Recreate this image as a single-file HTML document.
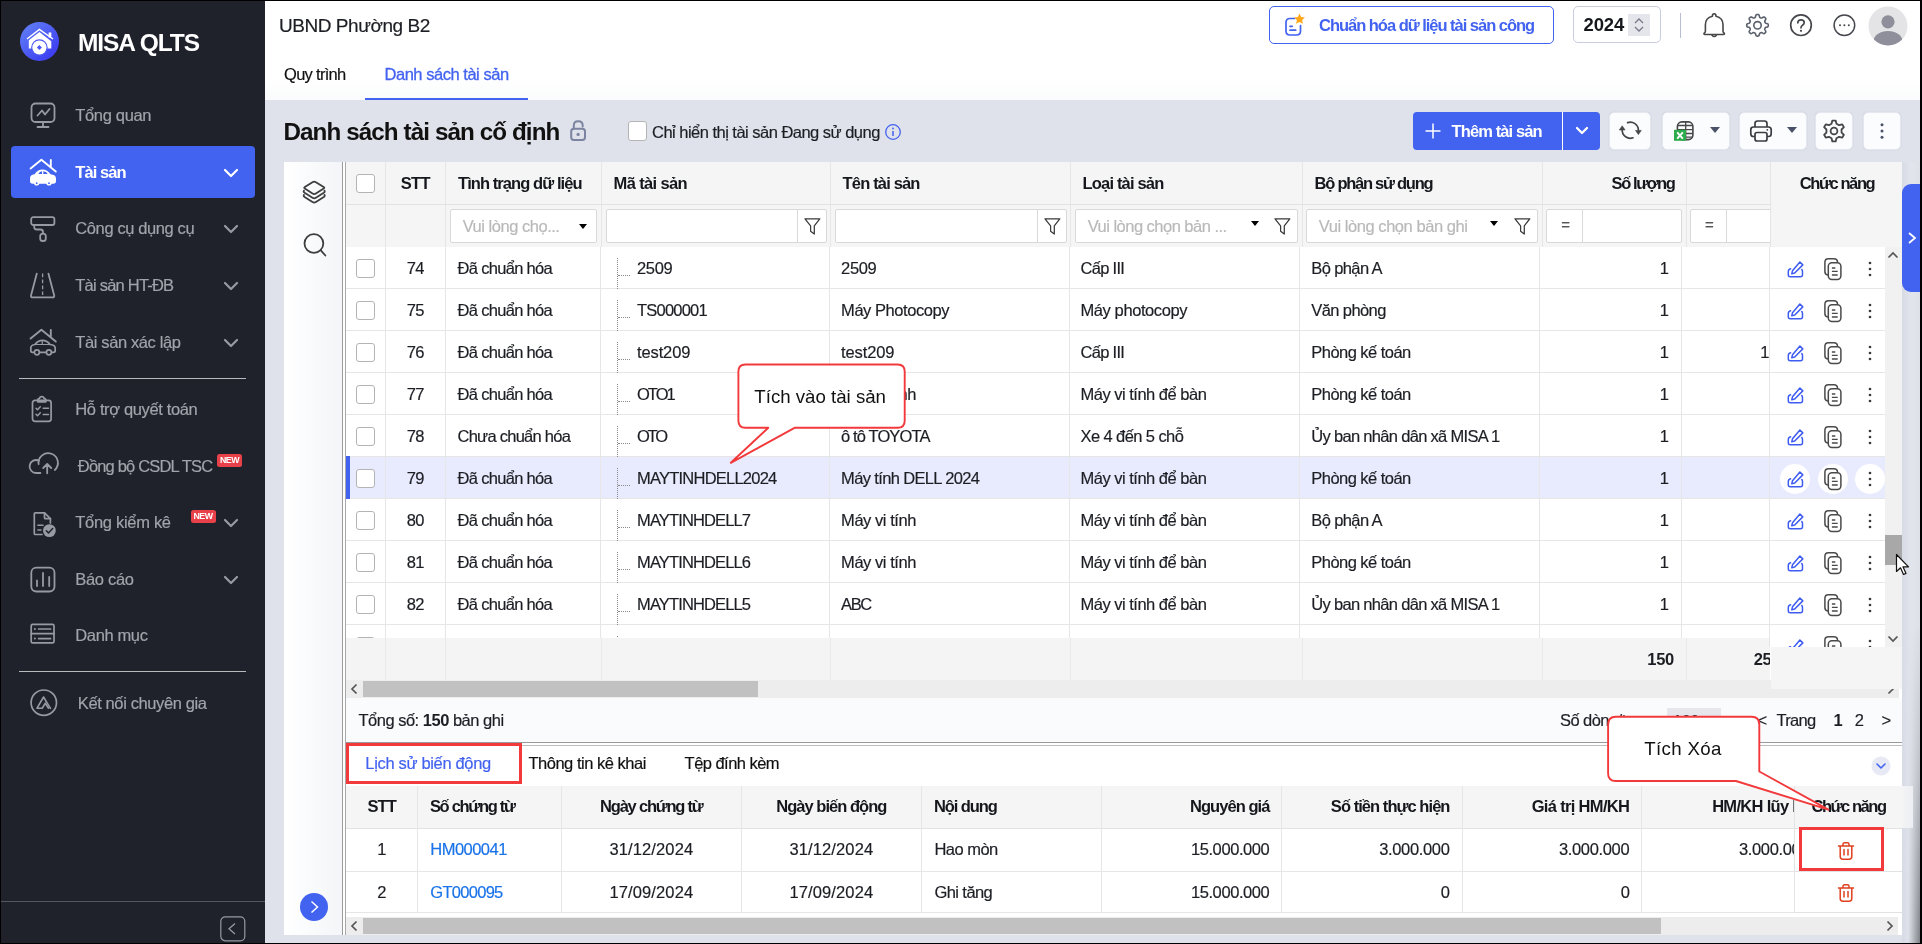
<!DOCTYPE html>
<html lang="vi"><head><meta charset="utf-8"><title>MISA QLTS - Danh sách tài sản cố định</title>
<style>
*{box-sizing:border-box;margin:0;padding:0}
html,body{width:1922px;height:944px;overflow:hidden}
#sidebar,#header,#toolbar,#panel,.ann{will-change:transform}
body{position:relative;background:#dfe2ea;font-family:"Liberation Sans",sans-serif;font-size:16.5px;color:#1c1e24;letter-spacing:-0.55px;-webkit-text-stroke:0.18px currentColor}
div,span,svg{position:absolute}
svg{display:block;overflow:visible}
b{font-weight:700}
/* sidebar */
#sidebar{left:0;top:0;width:265px;height:944px;background:#1f222b;z-index:5}
.logo{left:20px;top:22px;width:40px;height:40px}
.brand{left:78px;top:27px;line-height:32px;font-size:24.5px;font-weight:700;color:#fff;white-space:nowrap}
.sitem{left:0;width:265px;height:40px}
.sic{left:27px;top:5px;width:30px;height:30px}
.sic svg{left:0;top:0}
.stx{top:0;line-height:41px;color:#a1a4ab;margin-left:.5px;white-space:nowrap}
.sitem.act .stx{color:#fff;font-weight:700}
.sact{left:11px;width:244px;height:52px;background:#4262f0;border-radius:4px}
.schev{left:223px;top:16px}
.new{top:8px;width:25px;height:13px;background:#e8414a;border-radius:2.500px;color:#fff;font-size:8.800px;font-weight:700;line-height:13.500px;text-align:center;letter-spacing:-0.55px}
.ssep{left:19px;width:227px;height:1px;background:#b9babd}
.sbot{left:0;top:901px;width:265px;height:1px;background:#55575e}
.scoll{left:220px;top:916px;width:26px;height:26px}
/* header */
#header{left:0;top:0;width:1922px;height:100px;background:linear-gradient(#fff 78%,#fafbfc)}
.org{left:279px;top:10px;line-height:31px;font-size:19px;white-space:nowrap;color:#1c1e24}
.tab{top:59px;line-height:31px;white-space:nowrap}
.t1{left:284px;color:#111}
.t2{left:384.500px;color:#4262f0;-webkit-text-stroke:0.3px #4262f0}
.tabline{left:365px;top:98px;width:163px;height:2px;background:#4262f0}
.stdbtn{left:1269px;top:6px;width:285px;height:38px;border:1px solid #4262f0;border-radius:5px;background:#fff}
.stdbtn svg{left:12px;top:5px}
.stdbtn span{left:49px;top:0;line-height:37px;font-weight:700;color:#4262f0;white-space:nowrap}
.year{left:1573px;top:6px;width:88px;height:37px;border:1px solid #c9cddd;border-radius:5px;background:#fff}
.yv{left:9.500px;top:0;line-height:36px;font-size:18.5px;font-weight:700;color:#15171c}
.ysp{left:54px;top:7px;width:22px;height:22px;background:#e5e5ec}
.ysp svg{left:0;top:0}
.hsep{left:1680px;top:13px;width:1px;height:25px;background:#b9bdd0}
.hic{width:26px;height:28px}
.hic svg{left:0;top:0}
.avatar{left:1867.500px;top:5.500px;width:40px;height:40px}
/* toolbar */
#toolbar{left:0;top:0;width:1922px;height:944px}
.ptitle{left:283.500px;top:115px;line-height:33px;font-size:24.2px;font-weight:700;white-space:nowrap;color:#111}
.lock{left:568px;top:118px;width:20px;height:24px}
.cb{width:18.500px;height:18.500px;border:1px solid #b4b4b4;border-radius:3px;background:#fff}
.cblabel{left:652px;top:117px;line-height:31px;white-space:nowrap;color:#1c1e24}
.info{left:884px;top:123px;width:18px;height:18px}
.addbtn{left:1413px;top:112px;width:187px;height:38px;background:#4262f0;border-radius:4px}
.plus{left:11px;top:10px;width:18px;height:18px}
.addtx{left:38.500px;top:0;line-height:39px;color:#fff;font-weight:700;white-space:nowrap}
.adddiv{left:148.500px;top:0;width:1px;height:38px;background:#fff}
.addchev{left:161.500px;top:14px;width:14px;height:10px}
.tbtn{top:112px;height:37.500px;background:#fbfcfe;border-radius:5px;border:1px solid #e4e7ef;box-shadow:0 0 1px rgba(160,168,190,.5)}
.ti{top:0;height:35px;width:30px}
.ti svg{top:50%;transform:translateY(-50%);left:0}
.caret{width:0;height:0;border-left:5px solid transparent;border-right:5px solid transparent;border-top:5.500px solid #2a2c31;top:14px}
.tbtn .caret{border-top-color:#4a5268;border-top-width:6px}
/* panel */
#panel{left:0;top:0;width:1922px;height:944px}
.pbg{left:284px;top:162px;width:1618px;height:773px;background:#fff}
.lcol{left:284px;top:162px;width:58px;height:773px;background:linear-gradient(90deg,#fff,#f3f5f8)}
.lic{left:16px;width:28px;height:28px}
.lgo{left:16px;top:731px;width:28px;height:28px}
.dbl{left:342px;top:162px;width:4px;height:773px;border-left:1px solid #9a9a9a;border-right:1px solid #a8a8a8;background:#fff}
.ghead{left:346px;top:162px;width:1424px;height:85px;background:#f5f5f5;overflow:hidden}
.gh{top:0;height:42px;line-height:43px;font-weight:700;white-space:nowrap;color:#15171c;overflow:hidden}
.gh.l{padding-left:12.600px}
.gh.c{text-align:center}
.gh.r{text-align:right;padding-right:12px}
.vl{width:1px;background:#e6e6e6}
.hl{height:1px;background:#e2e2e2}
.fbox{top:47px;height:34px;background:#fff;border:1px solid #d9d9d9;border-radius:2px;overflow:hidden}
.ph{left:11.500px;top:0;line-height:32px;color:#b9b9b9;white-space:nowrap}
.fbox .caret{border-left-width:4.600px;border-right-width:4.600px;border-top:5.300px solid #000;margin-top:1px}
.fdiv{top:0;width:1px;height:34px;background:#d9d9d9}
.fun{top:6px;width:20px;height:20px}
.fun svg{left:0;top:0}
.eq{left:14px;top:0;line-height:30px;color:#555;font-size:15px}
.gbody{left:346px;top:247px;width:1424px;height:391px;overflow:hidden;background:#fff}
.grow{left:0;width:1424px;height:42px;border-bottom:1px solid #e6e6e6}
.grow.sel{background:#e8ebfd}
.grow.sel:before{content:"";position:absolute;left:0;top:-1px;width:3.500px;height:43px;background:#4262f0}
.gc{top:0;line-height:43px;white-space:nowrap;color:#1c1e24}
.gc.c{text-align:center}
.gc.r{text-align:right}
.gc.l{padding-left:13px}
.gc.lk{color:#1a73e8}
.tree{left:271px;top:11px;width:1px;height:31px;border-left:1px dotted #8a8a8a}
.tree2{left:272px;top:28px;width:12px;height:1px;border-top:1px dotted #8a8a8a}
.gfix{left:1770px;top:162px;width:132px;height:85px;background:#f5f5f5;border-left:1px solid #e4e4e4;z-index:3}
.fixbody{left:-2px;top:85px;width:116px;height:400px;background:#fff;overflow:hidden;border-left:1px solid #e6e6e6}
.frow{left:0;width:116px;height:42px;border-bottom:1px solid #e6e6e6}
.frow.sel{background:#e8ebfd}
.frow.sel .fi{background:#fff}
.fi{top:6.900px;width:30px;height:30px;border-radius:15px}
.fi svg{left:50%;top:50%;transform:translate(-50%,-50%)}
.sumfix{left:0;top:485px;width:131px;height:42px;background:#f5f5f5;z-index:3}
.vsb{left:1885px;top:247px;width:16.500px;height:401px;background:#f1f1f1}
.vsu{left:2px;top:4px}
.vsd{left:2px;top:388px}
.vsth{left:0;top:288px;width:16.500px;height:30px;background:#a8a8a8}
.gsum{left:346px;top:638px;width:1424px;height:42px;background:#f4f4f4;overflow:hidden}
.sumv{top:0;line-height:43px;font-weight:700;letter-spacing:-0.3px;text-align:right}
.hsb{left:346px;height:17.500px;background:#ededee}
.hsb svg{top:3px}
.hsl{left:4px;top:0}
.hsr{top:0}
.hsth{top:1px;height:16px;background:#c1c1c1}
.pager{left:346px;top:698px;width:1556px;height:45px;background:#fafbfd}
.tot{left:12.500px;top:0;line-height:44px;white-space:nowrap;letter-spacing:-0.5px}
.pg{top:0;line-height:44px;white-space:nowrap}
.pg.b{font-weight:700}
.pgsel{left:1321px;top:10px;width:54px;height:26px;background:#e6e6ec;line-height:26px;padding-left:6px}
.dblh{left:346px;top:742px;width:1556px;height:4px;border-top:1px solid #9a9a9a;border-bottom:1px solid #bdbdbd;background:#fff}
.btabs{left:346px;top:746px;width:1556px;height:40px;background:#fff}
.bt{top:0;line-height:34px;white-space:nowrap;color:#111}
.bt.a{color:#4262f0}
.bcoll{left:1524.500px;top:10px;width:20px;height:20px}
.bgrid{left:346px;top:786px;width:1556px;height:131px;background:#fff;overflow:hidden}
.bhead{left:0;top:0;width:1556px;height:43px;background:#f5f5f5;border-bottom:1px solid #e2e2e2}
.brow{left:0;width:1556px;border-bottom:1px solid #e6e6e6}
.brow .gc{line-height:inherit}
.bgrid .gh{line-height:41.500px}
.brow .gc.r{padding-right:12px}
.bfix{left:1448px;top:0;width:108px;height:127px;background:linear-gradient(#f5f5f5 42px,#fff 42px);border-left:1px solid #e4e4e4}
.trash{left:41px;width:20px;height:22px}
.trash svg{left:0;top:0}
/* annotations */
.redbox{border:3px solid #f23a3c;z-index:8}
.ann{z-index:9}
.sidetab{left:1902px;top:184px;width:19px;height:108px;background:#4262f0;border-radius:9px 0 0 9px;z-index:6}
.sidetab svg{left:4px;top:47px}
.cursor{z-index:10}
.rshadow{left:1902px;top:162px;width:18px;height:781px;background:linear-gradient(90deg,#d7dbe5,#e2e5ec 55%,#dee1e9);z-index:4}
.rshadow2{left:1902px;top:100px;width:18px;height:843px;background:linear-gradient(90deg,rgba(120,122,128,0) 35%,rgba(95,97,102,.75) 100%);-webkit-mask-image:linear-gradient(180deg,transparent 0,transparent 62%,rgba(0,0,0,.35) 80%,#000 100%);mask-image:linear-gradient(180deg,transparent 0,transparent 62%,rgba(0,0,0,.35) 80%,#000 100%);z-index:4}
.bd{background:#000;z-index:20}
.brand,.sitem.act .stx,.stdbtn span,.yv,.ptitle,.addtx,.gh,.sumv,b,.pg.b,.new{-webkit-text-stroke:0 transparent}
.ann text{-webkit-text-stroke:0 transparent}
.bhext{left:1902px;top:786px;width:11px;height:42px;background:linear-gradient(90deg,#f4f4f5,#eceef2);z-index:5}

</style></head><body>
<div id="sidebar"><div class="logo"><svg width="40" height="40" viewBox="0 0 40 40" ><defs><linearGradient id="lg" x1="0.15" y1="0.1" x2="0.85" y2="0.9"><stop offset="0" stop-color="#5e7af6"/><stop offset="1" stop-color="#3c3cf0"/></linearGradient></defs>
<circle cx="19.5" cy="19.5" r="19.5" fill="url(#lg)"/>
<path d="M7 17L19.400 7.400L33 17" fill="none" stroke="#fff" stroke-width="1.5"/>
<rect x="28.600" y="10.500" width="2.700" height="5" fill="#fff"/>
<path d="M8.800 26.500V18.300L19.400 10.100L31.300 19.300V26.500Z" fill="#fff"/>
<circle cx="19.400" cy="25.500" r="8.300" fill="#4d5af3"/>
<circle cx="19.400" cy="25.500" r="7.100" fill="#fff"/>
<path d="M19.400 23L21.900 25.500L19.400 28L16.900 25.500Z" fill="#4a55f2"/></svg></div><span class="brand" style="letter-spacing:-1.07px;">MISA QLTS</span><div class="sitem" style="top:95px"><span class="sic"><svg width="30" height="30" viewBox="0 0 30 30" ><g fill="none" stroke="#979aa2" stroke-width="1.8" stroke-linecap="round" stroke-linejoin="round"><rect x="4.500" y="3.500" width="23" height="18.500" rx="4"/><path d="M16 22V27M10.500 27H21.500"/><path d="M10.500 15.500L15 10.500L18 14.500L22.500 9"/></g></svg></span><span class="stx" style="left:74.8px;letter-spacing:-0.34px;">Tổng quan</span></div><div class="sact" style="top:146px"></div><div class="sitem act" style="top:152px"><span class="sic"><svg width="32" height="30" viewBox="0 0 32 30" ><path d="M3.600 11.600L14.400 2.800L28.800 14.600M23.800 3V10" fill="none" stroke="#fff" stroke-width="1.900" stroke-linecap="round" stroke-linejoin="round"/><path d="M3 21.500Q3 17.800 7.500 17.300Q10.500 12.600 15.500 12.600Q20.500 12.600 23.500 17.300Q29 17.800 29 21.500V24Q29 26.700 26.300 26.700H5.700Q3 26.700 3 24Z" fill="#fff"/>
<circle cx="9.700" cy="26" r="2.600" fill="#fff"/><circle cx="22" cy="26" r="2.600" fill="#fff"/>
<circle cx="9.700" cy="26.200" r="0.900" fill="#4262f0"/><circle cx="22" cy="26.200" r="0.900" fill="#4262f0"/>
<path d="M11.300 17Q12.500 14.600 15 14.300V17Z" fill="#4262f0"/><path d="M16.300 14.300Q19.500 14.600 20.700 17H16.300Z" fill="#4262f0"/></svg></span><span class="stx" style="left:74.8px;letter-spacing:-0.93px;">Tài sản</span><svg class="schev" width="16" height="10" viewBox="0 0 16 10"><path d="M2 2l6 6 6-6" fill="none" stroke="#fff" stroke-width="2.2" stroke-linecap="round" stroke-linejoin="round"/></svg></div><div class="sitem" style="top:208px"><span class="sic"><svg width="30" height="30" viewBox="0 0 30 30" ><g fill="none" stroke="#979aa2" stroke-width="1.8" stroke-linecap="round" stroke-linejoin="round"><rect x="4.200" y="4.200" width="23.200" height="7.800" rx="2"/><path d="M7.200 12V14Q7.200 16.500 9.700 16.500H13.500Q16 16.500 16 19V20.500"/><rect x="13.200" y="20.600" width="5.600" height="7.400" rx="2.600"/></g></svg></span><span class="stx" style="left:74.8px;letter-spacing:-0.39px;">Công cụ dụng cụ</span><svg class="schev" width="16" height="10" viewBox="0 0 16 10"><path d="M2 2l6 6 6-6" fill="none" stroke="#979aa2" stroke-width="2.2" stroke-linecap="round" stroke-linejoin="round"/></svg></div><div class="sitem" style="top:265px"><span class="sic"><svg width="30" height="30" viewBox="0 0 30 30" ><g fill="none" stroke="#979aa2" stroke-width="1.8" stroke-linecap="round" stroke-linejoin="round"><path d="M9.800 3.600L4 25.400Q3.600 27.400 5.600 27.400H25.600Q27.600 27.400 27.200 25.400L21.400 3.600"/></g><path d="M15.600 3.600V25" stroke="#979aa2" stroke-width="1.300" stroke-dasharray="3.600 2.400" fill="none"/></svg></span><span class="stx" style="left:74.8px;letter-spacing:-0.78px;">Tài sản HT-ĐB</span><svg class="schev" width="16" height="10" viewBox="0 0 16 10"><path d="M2 2l6 6 6-6" fill="none" stroke="#979aa2" stroke-width="2.2" stroke-linecap="round" stroke-linejoin="round"/></svg></div><div class="sitem" style="top:322px"><span class="sic"><svg width="32" height="30" viewBox="0 0 32 30" ><path d="M3.600 11.600L14.400 2.800L28.800 14.600M23.800 3V10" fill="none" stroke="#979aa2" stroke-width="1.900" stroke-linecap="round" stroke-linejoin="round"/><g fill="none" stroke="#979aa2" stroke-width="1.700" stroke-linejoin="round" stroke-linecap="round"><path d="M7 25.400H5.500Q3.800 25.400 3.800 23.500V21Q3.800 18 8 17.500Q10.800 13.300 15.500 13.300Q20.200 13.300 23 17.500Q28.200 18 28.200 21V23.500Q28.200 25.400 26.500 25.400H24.800M12.700 25.400H19"/>
<circle cx="9.900" cy="25.300" r="2.500"/><circle cx="21.900" cy="25.300" r="2.500"/><path d="M8.500 17.500H23M15.300 13.500V17.500" stroke-width="1.200"/></g></svg></span><span class="stx" style="left:74.8px;letter-spacing:-0.38px;">Tài sản xác lập</span><svg class="schev" width="16" height="10" viewBox="0 0 16 10"><path d="M2 2l6 6 6-6" fill="none" stroke="#979aa2" stroke-width="2.2" stroke-linecap="round" stroke-linejoin="round"/></svg></div><div class="ssep" style="top:378px"></div><div class="sitem" style="top:389px"><span class="sic"><svg width="30" height="30" viewBox="0 0 30 30" ><g fill="none" stroke="#979aa2" stroke-width="1.7" stroke-linecap="round" stroke-linejoin="round"><rect x="5.500" y="6.300" width="18.600" height="21" rx="2.500"/><path d="M10.800 7.800V5.800Q10.800 4.700 12.300 4.700Q12.800 2.600 14.800 2.600Q16.800 2.600 17.300 4.700Q18.800 4.700 18.800 5.800V7.800Z"/><path d="M9 14.200L10.500 15.700L13.300 12.700M16.200 14.300H21.500M9 20.300L10.500 21.800L13.300 18.800M16.200 20.500H21.500" stroke-width="1.500"/></g></svg></span><span class="stx" style="left:74.8px;letter-spacing:-0.36px;">Hỗ trợ quyết toán</span></div><div class="sitem" style="top:446px"><span class="sic"><svg width="34" height="30" viewBox="0 0 34 30" ><g fill="none" stroke="#979aa2" stroke-width="1.8" stroke-linecap="round" stroke-linejoin="round"><path d="M13.400 22H9.500A6.500 6.500 0 1 1 12 9.700"/><path d="M11.600 13.200A9.700 9.700 0 1 1 27.800 19"/><path d="M20.200 22.300V13.200M16.200 17L20.200 13L24.200 17"/></g></svg></span><span class="stx" style="left:77.3px;letter-spacing:-0.82px;">Đồng bộ CSDL TSC</span><span class="new" style="left:217px">NEW</span></div><div class="sitem" style="top:502px"><span class="sic"><svg width="32" height="32" viewBox="0 0 32 32" ><g fill="none" stroke="#979aa2" stroke-width="1.7" stroke-linecap="round" stroke-linejoin="round"><path d="M15 27.500H8.300Q7.300 27.500 7.300 26.500V6.800Q7.300 5.800 8.300 5.800H17.500L23.400 11.700V16"/><path d="M17.500 5.800V10.700Q17.500 11.700 18.500 11.700H23.400"/><path d="M10.900 18.300H16M10.900 23H14" stroke-width="1.500"/></g><circle cx="22.400" cy="23.600" r="6.400" fill="#979aa2"/><path d="M19.300 23.700L21.500 25.900L25.600 21.600" fill="none" stroke="#1f222b" stroke-width="1.500" stroke-linecap="round" stroke-linejoin="round"/></svg></span><span class="stx" style="left:74.8px;letter-spacing:-0.30px;">Tổng kiểm kê</span><span class="new" style="left:190.5px">NEW</span><svg class="schev" width="16" height="10" viewBox="0 0 16 10"><path d="M2 2l6 6 6-6" fill="none" stroke="#979aa2" stroke-width="2.2" stroke-linecap="round" stroke-linejoin="round"/></svg></div><div class="sitem" style="top:559px"><span class="sic"><svg width="32" height="32" viewBox="0 0 32 32" ><g fill="none" stroke="#979aa2" stroke-width="1.8" stroke-linecap="round" stroke-linejoin="round"><rect x="4.300" y="3.700" width="23.200" height="23.800" rx="5"/><path d="M10 16.500V22M16 9V22M22.200 13V22"/></g></svg></span><span class="stx" style="left:74.8px;letter-spacing:-0.32px;">Báo cáo</span><svg class="schev" width="16" height="10" viewBox="0 0 16 10"><path d="M2 2l6 6 6-6" fill="none" stroke="#979aa2" stroke-width="2.2" stroke-linecap="round" stroke-linejoin="round"/></svg></div><div class="sitem" style="top:615px"><span class="sic"><svg width="32" height="30" viewBox="0 0 32 30" ><g fill="none" stroke="#979aa2" stroke-width="1.7" stroke-linecap="round" stroke-linejoin="round"><rect x="4.200" y="4.400" width="22.800" height="18.500" rx="1.500"/><path d="M4.200 13.700H27"/><path d="M11.600 9H23.600M11.600 18.600H23.600"/></g><circle cx="7.900" cy="9" r="1" fill="#979aa2"/><circle cx="7.900" cy="18.600" r="1" fill="#979aa2"/></svg></span><span class="stx" style="left:74.8px;letter-spacing:-0.37px;">Danh mục</span></div><div class="ssep" style="top:671px"></div><div class="sitem" style="top:683px"><span class="sic"><svg width="32" height="32" viewBox="0 0 32 32" ><g fill="none" stroke="#979aa2" stroke-width="1.7" stroke-linecap="round" stroke-linejoin="round"><circle cx="16.800" cy="14.700" r="12.700"/><path d="M10 20.200L16.600 9L19.300 13.600M10 20.200H15.200L18.300 15.300L21.500 20.200" stroke-width="1.600"/><path d="M19.300 13.600L23.500 20.300" stroke-width="1.600"/></g></svg></span><span class="stx" style="left:77.3px;letter-spacing:-0.39px;">Kết nối chuyên gia</span></div><div class="sbot"></div><div class="scoll"><svg width="26" height="26" viewBox="0 0 26 26" ><rect x="0.800" y="0.800" width="24" height="24" rx="4.500" fill="none" stroke="#979aa2" stroke-width="1.200"/><path d="M15 7.500L9 12.800L15 18" fill="none" stroke="#979aa2" stroke-width="1.300"/></svg></div></div>
<div id="header">
<div class="org" style="letter-spacing:-0.45px;">UBND Phường B2</div>
<div class="tab t1" style="letter-spacing:-0.70px;">Quy trình</div>
<div class="tab t2" style="letter-spacing:-0.47px;">Danh sách tài sản</div>
<div class="tabline"></div>
<div class="stdbtn"><svg width="24" height="26" viewBox="0 0 24 26" ><path d="M12.500 6.500H8Q4 6.500 4 10.500V19Q4 23 8 23H14.500Q18.500 23 18.500 19V13.500" fill="none" stroke="#4262f0" stroke-width="1.700" stroke-linecap="round"/><path d="M8 14.300H10.200M8 18.200H13.700" stroke="#4262f0" stroke-width="1.700" stroke-linecap="round"/><path d="M17.500 1.500L19.100 5L22.900 5.400L20.100 8L20.900 11.800L17.500 9.900L14.100 11.800L14.900 8L12.100 5.400L15.900 5Z" fill="#ffa71a"/></svg><span style="letter-spacing:-1.02px;">Chuẩn hóa dữ liệu tài sản công</span></div>
<div class="year"><span class="yv" style="letter-spacing:-0.15px;">2024</span><span class="ysp"><svg width="22" height="22" viewBox="0 0 22 22" ><path d="M7 9L11 5L15 9M7 13L11 17L15 13" fill="none" stroke="#777b88" stroke-width="1.300"/></svg></span></div>
<div class="hsep"></div>
<div class="hic" style="left:1701px;top:11px"><svg width="26" height="28" viewBox="0 0 26 28" ><path d="M11.400 5.300Q11.400 2.800 13.200 2.800Q15 2.800 15 5.300Q22 6.800 22 13.800V20.300Q22 21.400 23.300 22.200Q23.800 23.500 22.500 23.500H3.900Q2.600 23.500 3.100 22.200Q4.400 21.400 4.400 20.300V13.800Q4.400 6.800 11.400 5.300Z" fill="none" stroke="#474747" stroke-width="1.600" stroke-linejoin="round"/><path d="M10.900 24Q13.200 27.200 15.500 24" fill="none" stroke="#474747" stroke-width="1.500" stroke-linecap="round"/></svg></div>
<div class="hic" style="left:1744px;top:12px"><svg width="26" height="26" viewBox="0 0 26 26" ><path d="M24.30 13.30 L24.28 13.72 L24.21 14.14 L24.03 14.55 L23.59 14.90 L22.77 15.14 L21.94 15.33 L21.48 15.55 L21.26 15.82 L21.11 16.11 L20.98 16.40 L20.87 16.70 L20.77 17.00 L20.74 17.35 L20.90 17.84 L21.36 18.55 L21.77 19.31 L21.83 19.87 L21.67 20.28 L21.42 20.62 L21.14 20.94 L20.82 21.22 L20.48 21.47 L20.07 21.63 L19.51 21.57 L18.75 21.16 L18.04 20.70 L17.55 20.54 L17.20 20.57 L16.90 20.67 L16.60 20.78 L16.31 20.91 L16.02 21.06 L15.75 21.28 L15.53 21.74 L15.34 22.57 L15.10 23.39 L14.75 23.83 L14.34 24.01 L13.92 24.08 L13.50 24.10 L13.08 24.08 L12.66 24.01 L12.25 23.83 L11.90 23.39 L11.66 22.57 L11.47 21.74 L11.25 21.28 L10.98 21.06 L10.69 20.91 L10.40 20.78 L10.10 20.67 L9.80 20.57 L9.45 20.54 L8.96 20.70 L8.25 21.16 L7.49 21.57 L6.93 21.63 L6.52 21.47 L6.18 21.22 L5.86 20.94 L5.58 20.62 L5.33 20.28 L5.17 19.87 L5.23 19.31 L5.64 18.55 L6.10 17.84 L6.26 17.35 L6.23 17.00 L6.13 16.70 L6.02 16.40 L5.89 16.11 L5.74 15.82 L5.52 15.55 L5.06 15.33 L4.23 15.14 L3.41 14.90 L2.97 14.55 L2.79 14.14 L2.72 13.72 L2.70 13.30 L2.72 12.88 L2.79 12.46 L2.97 12.05 L3.41 11.70 L4.23 11.46 L5.06 11.27 L5.52 11.05 L5.74 10.78 L5.89 10.49 L6.02 10.20 L6.13 9.90 L6.23 9.60 L6.26 9.25 L6.10 8.76 L5.64 8.05 L5.23 7.29 L5.17 6.73 L5.33 6.32 L5.58 5.98 L5.86 5.66 L6.18 5.38 L6.52 5.13 L6.93 4.97 L7.49 5.03 L8.25 5.44 L8.96 5.90 L9.45 6.06 L9.80 6.03 L10.10 5.93 L10.40 5.82 L10.69 5.69 L10.98 5.54 L11.25 5.32 L11.47 4.86 L11.66 4.03 L11.90 3.21 L12.25 2.77 L12.66 2.59 L13.08 2.52 L13.50 2.50 L13.92 2.52 L14.34 2.59 L14.75 2.77 L15.10 3.21 L15.34 4.03 L15.53 4.86 L15.75 5.32 L16.02 5.54 L16.31 5.69 L16.60 5.82 L16.90 5.93 L17.20 6.03 L17.55 6.06 L18.04 5.90 L18.75 5.44 L19.51 5.03 L20.07 4.97 L20.48 5.13 L20.82 5.38 L21.14 5.66 L21.42 5.98 L21.67 6.32 L21.83 6.73 L21.77 7.29 L21.36 8.05 L20.90 8.76 L20.74 9.25 L20.77 9.60 L20.87 9.90 L20.98 10.20 L21.11 10.49 L21.26 10.78 L21.48 11.05 L21.94 11.27 L22.77 11.46 L23.59 11.70 L24.03 12.05 L24.21 12.46 L24.28 12.88Z" fill="none" stroke="#5c626e" stroke-width="1.600" stroke-linejoin="round"/><circle cx="13.500" cy="13.300" r="3.700" fill="none" stroke="#5c626e" stroke-width="1.600"/></svg></div>
<div class="hic" style="left:1788px;top:12px"><svg width="26" height="26" viewBox="0 0 26 26" ><circle cx="13" cy="13.200" r="10.300" fill="none" stroke="#45474d" stroke-width="1.700"/><path d="M9.800 10.800Q9.800 7.800 13 7.800Q16.200 7.800 16.200 10.600Q16.200 12.300 14.500 13.300Q13 14.200 13 15.800" fill="none" stroke="#45474d" stroke-width="1.700" stroke-linecap="round"/><circle cx="13" cy="18.800" r="1.100" fill="#45474d"/></svg></div>
<div class="hic" style="left:1832px;top:12px"><svg width="26" height="26" viewBox="0 0 26 26" ><circle cx="12.400" cy="13.200" r="10.300" fill="none" stroke="#45474d" stroke-width="1.500"/><circle cx="8" cy="13.200" r="1" fill="#45474d"/><circle cx="12.400" cy="13.200" r="1" fill="#45474d"/><circle cx="16.800" cy="13.200" r="1" fill="#45474d"/></svg></div>
<div class="avatar"><svg width="40" height="40" viewBox="0 0 40 40" ><defs><clipPath id="av"><circle cx="20" cy="20" r="19.500"/></clipPath></defs><circle cx="20" cy="20" r="19.500" fill="#e4e4e7"/><g clip-path="url(#av)"><circle cx="20" cy="15.800" r="6.600" fill="#8e8f9b"/><ellipse cx="20" cy="35.500" rx="14.500" ry="10.500" fill="#8e8f9b"/></g></svg></div>
</div>
<div id="toolbar">
<div class="ptitle" style="letter-spacing:-0.90px;">Danh sách tài sản cố định</div>
<div class="lock"><svg width="20" height="24" viewBox="0 0 20 24" ><rect x="3.200" y="10.800" width="13.800" height="11.100" rx="2.600" fill="none" stroke="#7c84a1" stroke-width="2"/><path d="M5.800 10.800V7.600Q5.800 3.300 10.200 3.300Q14.700 3.300 14.700 7.600V8.400" fill="none" stroke="#7c84a1" stroke-width="2" stroke-linecap="round"/><circle cx="10.100" cy="16.400" r="1.600" fill="#7c84a1"/></svg></div>
<div class="cb" style="left:628.300px;top:121.400px;height:19.400px"></div>
<div class="cblabel" style="letter-spacing:-0.52px;">Chỉ hiển thị tài sản Đang sử dụng</div>
<div class="info"><svg width="18" height="18" viewBox="0 0 18 18" ><circle cx="9" cy="9" r="7.300" fill="none" stroke="#4262f0" stroke-width="1.300"/><path d="M9 8V13" stroke="#4262f0" stroke-width="1.500"/><circle cx="9" cy="5.500" r="0.900" fill="#4262f0"/></svg></div>
<div class="addbtn"><span class="plus"><svg width="18" height="18" viewBox="0 0 18 18" ><path d="M9 1.500V16.500M1.500 9H16.500" stroke="#fff" stroke-width="1.500"/></svg></span><span class="addtx" style="letter-spacing:-0.89px;">Thêm tài sản</span><span class="adddiv"></span><span class="addchev"><svg width="14" height="10" viewBox="0 0 14 10" ><path d="M2 2L7 7L12 2" fill="none" stroke="#fff" stroke-width="2.300" stroke-linecap="round" stroke-linejoin="round"/></svg></span></div>
<div class="tbtn" style="left:1608.800px;width:42.500px"><span class="ti" style="left:8.500px"><svg width="26" height="22" viewBox="0 0 26 22" ><path d="M9.600 2.600A8.100 8.100 0 0 1 20.400 10.200M15 17.800A8.100 8.100 0 0 1 4.200 10.200" fill="none" stroke="#464646" stroke-width="1.700" stroke-linecap="round"/><path d="M17.500 10.400H23.300L20.400 14.600Z M1.300 10H7.100L4.200 5.800Z" fill="#464646" stroke="#464646" stroke-width="0.600" stroke-linejoin="round"/></svg></span></div>
<div class="tbtn" style="left:1661.800px;width:68.500px"><span class="ti" style="left:9.500px"><svg width="22" height="22" viewBox="0 0 22 22" ><rect x="5.400" y="1.900" width="15.500" height="17.700" rx="4.500" fill="none" stroke="#464646" stroke-width="1.600"/><path d="M5.400 5.500H20.900M5.400 9.600H20.900M5.400 13.500H20.900M5.400 17.100H20.900M13.700 1.900V19.600" stroke="#464646" stroke-width="1.300"/><rect x="2" y="9.800" width="12" height="11" fill="#2eac4d"/><path d="M5.200 12.300L10.800 18.600M10.800 12.300L5.200 18.600" stroke="#fff" stroke-width="1.900"/></svg></span><span class="caret" style="left:47.500px"></span></div>
<div class="tbtn" style="left:1738.800px;width:68.500px"><span class="ti" style="left:9px"><svg width="24" height="24" viewBox="0 0 24 24" ><path d="M6 8V4.500Q6 2 8.500 2H15.500Q18 2 18 4.500V8" fill="none" stroke="#3a3c42" stroke-width="1.700"/><path d="M6 17.500H4.500Q1.800 17.500 1.800 14.800V10.700Q1.800 8 4.500 8H19.500Q22.200 8 22.200 10.700V14.800Q22.200 17.500 19.500 17.500H18" fill="none" stroke="#3a3c42" stroke-width="1.700"/><rect x="6" y="13.500" width="12" height="8.500" rx="2" fill="none" stroke="#3a3c42" stroke-width="1.700"/><circle cx="18.300" cy="10.800" r="0.900" fill="#3a3c42"/></svg></span><span class="caret" style="left:47px"></span></div>
<div class="tbtn" style="left:1814.800px;width:38.500px"><span class="ti" style="left:6.500px"><svg width="24" height="24" viewBox="0 0 24 24" ><path d="M9.54 4.70 L10.34 1.53 L13.66 1.53 L14.46 4.70 L17.09 6.22 L20.24 5.33 L21.90 8.20 L19.55 10.48 L19.55 13.52 L21.90 15.80 L20.24 18.67 L17.09 17.78 L14.46 19.30 L13.66 22.47 L10.34 22.47 L9.54 19.30 L6.91 17.78 L3.76 18.67 L2.10 15.80 L4.45 13.52 L4.45 10.48 L2.10 8.20 L3.76 5.33 L6.91 6.22Z" fill="none" stroke="#464646" stroke-width="1.800" stroke-linejoin="round"/><circle cx="12" cy="12" r="3.400" fill="none" stroke="#464646" stroke-width="1.800"/></svg></span></div>
<div class="tbtn" style="left:1862.800px;width:38.500px"><span class="ti" style="left:15px"><svg width="6" height="18" viewBox="0 0 6 18" ><circle cx="3" cy="2.800" r="1.500" fill="#4a5268"/><circle cx="3" cy="9" r="1.500" fill="#4a5268"/><circle cx="3" cy="15.200" r="1.500" fill="#4a5268"/></svg></span></div>
</div>
<div id="panel"><div class="pbg"></div><div class="lcol"><div class="lic" style="top:16px"><svg width="28" height="28" viewBox="0 0 28 28" ><path d="M12.500 4.200Q14.200 3.100 15.900 4.200L23.700 9Q24.900 9.800 23.700 10.600L15.900 15.500Q14.200 16.600 12.500 15.500L4.800 10.600Q3.600 9.800 4.800 9Z M4 12.600Q3.100 13.800 4.600 14.800L12.500 19.800Q14.200 20.900 15.900 19.800L23.800 14.800Q25.300 13.800 24.400 12.600 M4 16.900Q3.100 18.100 4.600 19.100L12.500 24.100Q14.200 25.200 15.900 24.100L23.800 19.100Q25.300 18.100 24.400 16.900" fill="none" stroke="#3e3e3e" stroke-width="1.800" stroke-linejoin="round" stroke-linecap="round"/></svg></div><div class="lic" style="top:69px"><svg width="28" height="28" viewBox="0 0 28 28" ><circle cx="13.900" cy="12.500" r="9.400" fill="none" stroke="#3e3e3e" stroke-width="1.800"/><path d="M20.800 19.400L25.400 24.500" stroke="#3e3e3e" stroke-width="1.800" stroke-linecap="round"/></svg></div><div class="lgo"><svg width="28" height="28" viewBox="0 0 28 28" ><circle cx="14" cy="14" r="14" fill="#4262f0"/><path d="M11.500 8.500L17.500 14L11.500 19.500" fill="none" stroke="#fff" stroke-width="1.500"/></svg></div></div><div class="dbl"></div><div class="ghead"><div class="cb" style="left:10.399999999999977px;top:12px"></div><div class="gh c" style="left:39.3px;width:60.1px;letter-spacing:-0.64px;">STT</div><div class="gh l" style="left:99.4px;width:155.6px;letter-spacing:-0.92px;">Tình trạng dữ liệu</div><div class="gh l" style="left:255.0px;width:229.0px;letter-spacing:-0.64px;">Mã tài sản</div><div class="gh l" style="left:484.0px;width:240.0px;letter-spacing:-0.84px;">Tên tài sản</div><div class="gh l" style="left:724.0px;width:232.0px;letter-spacing:-0.83px;">Loại tài sản</div><div class="gh l" style="left:956.0px;width:240.0px;letter-spacing:-1.26px;">Bộ phận sử dụng</div><div class="gh r" style="left:1196.0px;width:144.4px;letter-spacing:-1.41px;">Số lượng</div><div class="vl" style="left:39.3px;top:0;height:85px;background:#e6e6e6"></div><div class="vl" style="left:99.4px;top:0;height:85px;background:#e6e6e6"></div><div class="vl" style="left:255.0px;top:0;height:85px;background:#e6e6e6"></div><div class="vl" style="left:484.0px;top:0;height:85px;background:#e6e6e6"></div><div class="vl" style="left:724.0px;top:0;height:85px;background:#e6e6e6"></div><div class="vl" style="left:956.0px;top:0;height:85px;background:#e6e6e6"></div><div class="vl" style="left:1196.0px;top:0;height:85px;background:#e6e6e6"></div><div class="vl" style="left:1340.4px;top:0;height:85px;background:#e6e6e6"></div><div class="hl" style="left:0;top:42px;width:1424px"></div><div class="fbox" style="left:104.2px;width:146.9px"><span class="ph" style="letter-spacing:-0.48px;">Vui lòng chọ...</span><span class="caret" style="left:128px;top:13px"></span></div><div class="fbox" style="left:260.4px;width:220.2px"><span class="fdiv" style="left:190px"></span><span class="fun" style="left:196px"><svg width="20" height="20" viewBox="0 0 20 20" ><path d="M2 2.800H16.800L11.300 9.800V18L7.600 15.200V9.800Z" fill="none" stroke="#3a3a3a" stroke-width="1.250" stroke-linejoin="round"/></svg></span></div><div class="fbox" style="left:489.2px;width:231.5px"><span class="fdiv" style="left:201px"></span><span class="fun" style="left:207px"><svg width="20" height="20" viewBox="0 0 20 20" ><path d="M2 2.800H16.800L11.300 9.800V18L7.600 15.200V9.800Z" fill="none" stroke="#3a3a3a" stroke-width="1.250" stroke-linejoin="round"/></svg></span></div><div class="fbox" style="left:729.2px;width:222.6px"><span class="ph" style="letter-spacing:-0.52px;">Vui lòng chọn bản ...</span><span class="caret" style="left:174.500px;top:10px"></span><span class="fun" style="left:196.500px"><svg width="20" height="20" viewBox="0 0 20 20" ><path d="M2 2.800H16.800L11.300 9.800V18L7.600 15.200V9.800Z" fill="none" stroke="#3a3a3a" stroke-width="1.250" stroke-linejoin="round"/></svg></span></div><div class="fbox" style="left:960.2px;width:231.5px"><span class="ph" style="letter-spacing:-0.44px;">Vui lòng chọn bản ghi</span><span class="caret" style="left:183px;top:10px"></span><span class="fun" style="left:206px"><svg width="20" height="20" viewBox="0 0 20 20" ><path d="M2 2.800H16.800L11.300 9.800V18L7.600 15.200V9.800Z" fill="none" stroke="#3a3a3a" stroke-width="1.250" stroke-linejoin="round"/></svg></span></div><div class="fbox" style="left:1200.2px;width:135.9px"><span class="eq">=</span><span class="fdiv" style="left:35px"></span></div><div class="fbox" style="left:1344.1px;width:110.4px"><span class="eq">=</span><span class="fdiv" style="left:35px"></span></div></div><div class="gbody"><div class="grow" style="top:0px"><div class="cb" style="left:10.399999999999977px;top:12px"></div><div class="gc c" style="left:39.3px;width:60px">74</div><div class="tree"></div><div class="tree2"></div><div class="gc" style="left:111.5px;letter-spacing:-0.68px;">Đã chuẩn hóa</div><div class="gc" style="left:291.0px;letter-spacing:-0.34px;">2509</div><div class="gc" style="left:495.1px;letter-spacing:-0.34px;">2509</div><div class="gc" style="left:734.5px;letter-spacing:-0.70px;">Cấp III</div><div class="gc" style="left:965.3px;letter-spacing:-0.61px;">Bộ phận A</div><div class="gc r" style="left:1254px;width:68.5px">1</div><div class="gc r" style="left:1354px;width:69px"></div></div><div class="grow" style="top:42px"><div class="cb" style="left:10.399999999999977px;top:12px"></div><div class="gc c" style="left:39.3px;width:60px">75</div><div class="tree"></div><div class="tree2"></div><div class="gc" style="left:111.5px;letter-spacing:-0.68px;">Đã chuẩn hóa</div><div class="gc" style="left:291.0px;letter-spacing:-0.78px;">TS000001</div><div class="gc" style="left:495.1px;letter-spacing:-0.45px;">Máy Photocopy</div><div class="gc" style="left:734.5px;letter-spacing:-0.41px;">Máy photocopy</div><div class="gc" style="left:965.3px;letter-spacing:-0.60px;">Văn phòng</div><div class="gc r" style="left:1254px;width:68.5px">1</div><div class="gc r" style="left:1354px;width:69px"></div></div><div class="grow" style="top:84px"><div class="cb" style="left:10.399999999999977px;top:12px"></div><div class="gc c" style="left:39.3px;width:60px">76</div><div class="tree"></div><div class="tree2"></div><div class="gc" style="left:111.5px;letter-spacing:-0.68px;">Đã chuẩn hóa</div><div class="gc" style="left:291.0px;letter-spacing:-0.12px;">test209</div><div class="gc" style="left:495.1px;letter-spacing:-0.12px;">test209</div><div class="gc" style="left:734.5px;letter-spacing:-0.70px;">Cấp III</div><div class="gc" style="left:965.3px;letter-spacing:-0.54px;">Phòng kế toán</div><div class="gc r" style="left:1254px;width:68.5px">1</div><div class="gc r" style="left:1354px;width:69px">1</div></div><div class="grow" style="top:126px"><div class="cb" style="left:10.399999999999977px;top:12px"></div><div class="gc c" style="left:39.3px;width:60px">77</div><div class="tree"></div><div class="tree2"></div><div class="gc" style="left:111.5px;letter-spacing:-0.68px;">Đã chuẩn hóa</div><div class="gc" style="left:291.0px;letter-spacing:-1.98px;">OTO1</div><div class="gc" style="left:495.1px;letter-spacing:-0.45px;">Máy vi tính</div><div class="gc" style="left:734.5px;letter-spacing:-0.50px;">Máy vi tính để bàn</div><div class="gc" style="left:965.3px;letter-spacing:-0.54px;">Phòng kế toán</div><div class="gc r" style="left:1254px;width:68.5px">1</div><div class="gc r" style="left:1354px;width:69px"></div></div><div class="grow" style="top:168px"><div class="cb" style="left:10.399999999999977px;top:12px"></div><div class="gc c" style="left:39.3px;width:60px">78</div><div class="tree"></div><div class="tree2"></div><div class="gc" style="left:111.5px;letter-spacing:-0.74px;">Chưa chuẩn hóa</div><div class="gc" style="left:291.0px;letter-spacing:-2.23px;">OTO</div><div class="gc" style="left:495.1px;letter-spacing:-0.88px;">ô tô TOYOTA</div><div class="gc" style="left:734.5px;letter-spacing:-0.59px;">Xe 4 đến 5 chỗ</div><div class="gc" style="left:965.3px;letter-spacing:-0.69px;">Ủy ban nhân dân xã MISA 1</div><div class="gc r" style="left:1254px;width:68.5px">1</div><div class="gc r" style="left:1354px;width:69px"></div></div><div class="grow sel" style="top:210px"><div class="cb" style="left:10.399999999999977px;top:12px"></div><div class="gc c" style="left:39.3px;width:60px">79</div><div class="tree"></div><div class="tree2"></div><div class="gc" style="left:111.5px;letter-spacing:-0.68px;">Đã chuẩn hóa</div><div class="gc" style="left:291.0px;letter-spacing:-0.77px;">MAYTINHDELL2024</div><div class="gc" style="left:495.1px;letter-spacing:-0.64px;">Máy tính DELL 2024</div><div class="gc" style="left:734.5px;letter-spacing:-0.50px;">Máy vi tính để bàn</div><div class="gc" style="left:965.3px;letter-spacing:-0.54px;">Phòng kế toán</div><div class="gc r" style="left:1254px;width:68.5px">1</div><div class="gc r" style="left:1354px;width:69px"></div></div><div class="grow" style="top:252px"><div class="cb" style="left:10.399999999999977px;top:12px"></div><div class="gc c" style="left:39.3px;width:60px">80</div><div class="tree"></div><div class="tree2"></div><div class="gc" style="left:111.5px;letter-spacing:-0.68px;">Đã chuẩn hóa</div><div class="gc" style="left:291.0px;letter-spacing:-0.86px;">MAYTINHDELL7</div><div class="gc" style="left:495.1px;letter-spacing:-0.45px;">Máy vi tính</div><div class="gc" style="left:734.5px;letter-spacing:-0.50px;">Máy vi tính để bàn</div><div class="gc" style="left:965.3px;letter-spacing:-0.61px;">Bộ phận A</div><div class="gc r" style="left:1254px;width:68.5px">1</div><div class="gc r" style="left:1354px;width:69px"></div></div><div class="grow" style="top:294px"><div class="cb" style="left:10.399999999999977px;top:12px"></div><div class="gc c" style="left:39.3px;width:60px">81</div><div class="tree"></div><div class="tree2"></div><div class="gc" style="left:111.5px;letter-spacing:-0.68px;">Đã chuẩn hóa</div><div class="gc" style="left:291.0px;letter-spacing:-0.86px;">MAYTINHDELL6</div><div class="gc" style="left:495.1px;letter-spacing:-0.45px;">Máy vi tính</div><div class="gc" style="left:734.5px;letter-spacing:-0.50px;">Máy vi tính để bàn</div><div class="gc" style="left:965.3px;letter-spacing:-0.54px;">Phòng kế toán</div><div class="gc r" style="left:1254px;width:68.5px">1</div><div class="gc r" style="left:1354px;width:69px"></div></div><div class="grow" style="top:336px"><div class="cb" style="left:10.399999999999977px;top:12px"></div><div class="gc c" style="left:39.3px;width:60px">82</div><div class="tree"></div><div class="tree2"></div><div class="gc" style="left:111.5px;letter-spacing:-0.68px;">Đã chuẩn hóa</div><div class="gc" style="left:291.0px;letter-spacing:-0.86px;">MAYTINHDELL5</div><div class="gc" style="left:495.1px;letter-spacing:-1.47px;">ABC</div><div class="gc" style="left:734.5px;letter-spacing:-0.50px;">Máy vi tính để bàn</div><div class="gc" style="left:965.3px;letter-spacing:-0.69px;">Ủy ban nhân dân xã MISA 1</div><div class="gc r" style="left:1254px;width:68.5px">1</div><div class="gc r" style="left:1354px;width:69px"></div></div><div class="grow" style="top:378px"><div class="cb" style="left:10.399999999999977px;top:12px"></div><div class="gc c" style="left:39.3px;width:60px">83</div><div class="tree"></div><div class="tree2"></div><div class="gc" style="left:111.5px;letter-spacing:-0.68px;">Đã chuẩn hóa</div><div class="gc" style="left:291.0px;letter-spacing:-0.86px;">MAYTINHDELL4</div><div class="gc" style="left:495.1px;letter-spacing:-0.45px;">Máy vi tính</div><div class="gc" style="left:734.5px;letter-spacing:-0.50px;">Máy vi tính để bàn</div><div class="gc" style="left:965.3px;letter-spacing:-0.54px;">Phòng kế toán</div><div class="gc r" style="left:1254px;width:68.5px">1</div><div class="gc r" style="left:1354px;width:69px"></div></div><div class="vl" style="left:39.3px;top:0;height:400px"></div><div class="vl" style="left:99.4px;top:0;height:400px"></div><div class="vl" style="left:254.3px;top:0;height:400px"></div><div class="vl" style="left:483.2px;top:0;height:400px"></div><div class="vl" style="left:722.5px;top:0;height:400px"></div><div class="vl" style="left:953.3px;top:0;height:400px"></div><div class="vl" style="left:1192.5px;top:0;height:400px"></div><div class="vl" style="left:1335.2px;top:0;height:400px"></div></div><div class="gfix"><div class="gh c" style="left:0;width:132px;top:0;letter-spacing:-1.40px;">Chức năng</div><div class="fixbody"><div class="frow" style="top:0px"><span class="fi" style="left:10px"><svg width="20" height="20" viewBox="0 0 20 20" ><path d="M14.900 3L17.800 5.900L9.700 14L6.800 14.700L7.500 11.700Z" fill="none" stroke="#3f5cf0" stroke-width="1.500" stroke-linejoin="round"/><path d="M5.600 9.800Q3.300 10.300 3.300 12.500V15.800Q3.300 17.800 5.300 17.800H15.500Q17.500 17.800 17.500 15.800V12.500Q17.500 11.300 16.800 10.600" fill="none" stroke="#3f5cf0" stroke-width="1.500" stroke-linecap="round"/></svg></span><span class="fi" style="left:48px"><svg width="22" height="26" viewBox="0 0 22 26" ><path d="M15.500 5.800Q15.200 2.700 12 2.700H6.400Q2.900 2.700 2.900 6.200V15.500Q2.900 18.700 5.800 19" fill="none" stroke="#4a4a4a" stroke-width="1.500" stroke-linecap="round"/><rect x="6.300" y="6.700" width="12.600" height="16.700" rx="3.600" fill="none" stroke="#4a4a4a" stroke-width="1.500"/><path d="M9.900 12H13.300M9.900 15.400H15.700M9.900 19H15.700" stroke="#4a4a4a" stroke-width="1.400"/></svg></span><span class="fi" style="left:85px"><svg width="6" height="18" viewBox="0 0 6 18" ><circle cx="3" cy="3" r="1.350" fill="#3a3a3a"/><circle cx="3" cy="9" r="1.350" fill="#3a3a3a"/><circle cx="3" cy="15" r="1.350" fill="#3a3a3a"/></svg></span></div><div class="frow" style="top:42px"><span class="fi" style="left:10px"><svg width="20" height="20" viewBox="0 0 20 20" ><path d="M14.900 3L17.800 5.900L9.700 14L6.800 14.700L7.500 11.700Z" fill="none" stroke="#3f5cf0" stroke-width="1.500" stroke-linejoin="round"/><path d="M5.600 9.800Q3.300 10.300 3.300 12.500V15.800Q3.300 17.800 5.300 17.800H15.500Q17.500 17.800 17.500 15.800V12.500Q17.500 11.300 16.800 10.600" fill="none" stroke="#3f5cf0" stroke-width="1.500" stroke-linecap="round"/></svg></span><span class="fi" style="left:48px"><svg width="22" height="26" viewBox="0 0 22 26" ><path d="M15.500 5.800Q15.200 2.700 12 2.700H6.400Q2.900 2.700 2.900 6.200V15.500Q2.900 18.700 5.800 19" fill="none" stroke="#4a4a4a" stroke-width="1.500" stroke-linecap="round"/><rect x="6.300" y="6.700" width="12.600" height="16.700" rx="3.600" fill="none" stroke="#4a4a4a" stroke-width="1.500"/><path d="M9.900 12H13.300M9.900 15.400H15.700M9.900 19H15.700" stroke="#4a4a4a" stroke-width="1.400"/></svg></span><span class="fi" style="left:85px"><svg width="6" height="18" viewBox="0 0 6 18" ><circle cx="3" cy="3" r="1.350" fill="#3a3a3a"/><circle cx="3" cy="9" r="1.350" fill="#3a3a3a"/><circle cx="3" cy="15" r="1.350" fill="#3a3a3a"/></svg></span></div><div class="frow" style="top:84px"><span class="fi" style="left:10px"><svg width="20" height="20" viewBox="0 0 20 20" ><path d="M14.900 3L17.800 5.900L9.700 14L6.800 14.700L7.500 11.700Z" fill="none" stroke="#3f5cf0" stroke-width="1.500" stroke-linejoin="round"/><path d="M5.600 9.800Q3.300 10.300 3.300 12.500V15.800Q3.300 17.800 5.300 17.800H15.500Q17.500 17.800 17.500 15.800V12.500Q17.500 11.300 16.800 10.600" fill="none" stroke="#3f5cf0" stroke-width="1.500" stroke-linecap="round"/></svg></span><span class="fi" style="left:48px"><svg width="22" height="26" viewBox="0 0 22 26" ><path d="M15.500 5.800Q15.200 2.700 12 2.700H6.400Q2.900 2.700 2.900 6.200V15.500Q2.900 18.700 5.800 19" fill="none" stroke="#4a4a4a" stroke-width="1.500" stroke-linecap="round"/><rect x="6.300" y="6.700" width="12.600" height="16.700" rx="3.600" fill="none" stroke="#4a4a4a" stroke-width="1.500"/><path d="M9.900 12H13.300M9.900 15.400H15.700M9.900 19H15.700" stroke="#4a4a4a" stroke-width="1.400"/></svg></span><span class="fi" style="left:85px"><svg width="6" height="18" viewBox="0 0 6 18" ><circle cx="3" cy="3" r="1.350" fill="#3a3a3a"/><circle cx="3" cy="9" r="1.350" fill="#3a3a3a"/><circle cx="3" cy="15" r="1.350" fill="#3a3a3a"/></svg></span></div><div class="frow" style="top:126px"><span class="fi" style="left:10px"><svg width="20" height="20" viewBox="0 0 20 20" ><path d="M14.900 3L17.800 5.900L9.700 14L6.800 14.700L7.500 11.700Z" fill="none" stroke="#3f5cf0" stroke-width="1.500" stroke-linejoin="round"/><path d="M5.600 9.800Q3.300 10.300 3.300 12.500V15.800Q3.300 17.800 5.300 17.800H15.500Q17.500 17.800 17.500 15.800V12.500Q17.500 11.300 16.800 10.600" fill="none" stroke="#3f5cf0" stroke-width="1.500" stroke-linecap="round"/></svg></span><span class="fi" style="left:48px"><svg width="22" height="26" viewBox="0 0 22 26" ><path d="M15.500 5.800Q15.200 2.700 12 2.700H6.400Q2.900 2.700 2.900 6.200V15.500Q2.900 18.700 5.800 19" fill="none" stroke="#4a4a4a" stroke-width="1.500" stroke-linecap="round"/><rect x="6.300" y="6.700" width="12.600" height="16.700" rx="3.600" fill="none" stroke="#4a4a4a" stroke-width="1.500"/><path d="M9.900 12H13.300M9.900 15.400H15.700M9.900 19H15.700" stroke="#4a4a4a" stroke-width="1.400"/></svg></span><span class="fi" style="left:85px"><svg width="6" height="18" viewBox="0 0 6 18" ><circle cx="3" cy="3" r="1.350" fill="#3a3a3a"/><circle cx="3" cy="9" r="1.350" fill="#3a3a3a"/><circle cx="3" cy="15" r="1.350" fill="#3a3a3a"/></svg></span></div><div class="frow" style="top:168px"><span class="fi" style="left:10px"><svg width="20" height="20" viewBox="0 0 20 20" ><path d="M14.900 3L17.800 5.900L9.700 14L6.800 14.700L7.500 11.700Z" fill="none" stroke="#3f5cf0" stroke-width="1.500" stroke-linejoin="round"/><path d="M5.600 9.800Q3.300 10.300 3.300 12.500V15.800Q3.300 17.800 5.300 17.800H15.500Q17.500 17.800 17.500 15.800V12.500Q17.500 11.300 16.800 10.600" fill="none" stroke="#3f5cf0" stroke-width="1.500" stroke-linecap="round"/></svg></span><span class="fi" style="left:48px"><svg width="22" height="26" viewBox="0 0 22 26" ><path d="M15.500 5.800Q15.200 2.700 12 2.700H6.400Q2.900 2.700 2.900 6.200V15.500Q2.900 18.700 5.800 19" fill="none" stroke="#4a4a4a" stroke-width="1.500" stroke-linecap="round"/><rect x="6.300" y="6.700" width="12.600" height="16.700" rx="3.600" fill="none" stroke="#4a4a4a" stroke-width="1.500"/><path d="M9.900 12H13.300M9.900 15.400H15.700M9.900 19H15.700" stroke="#4a4a4a" stroke-width="1.400"/></svg></span><span class="fi" style="left:85px"><svg width="6" height="18" viewBox="0 0 6 18" ><circle cx="3" cy="3" r="1.350" fill="#3a3a3a"/><circle cx="3" cy="9" r="1.350" fill="#3a3a3a"/><circle cx="3" cy="15" r="1.350" fill="#3a3a3a"/></svg></span></div><div class="frow sel" style="top:210px"><span class="fi" style="left:10px"><svg width="20" height="20" viewBox="0 0 20 20" ><path d="M14.900 3L17.800 5.900L9.700 14L6.800 14.700L7.500 11.700Z" fill="none" stroke="#3f5cf0" stroke-width="1.500" stroke-linejoin="round"/><path d="M5.600 9.800Q3.300 10.300 3.300 12.500V15.800Q3.300 17.800 5.300 17.800H15.500Q17.500 17.800 17.500 15.800V12.500Q17.500 11.300 16.800 10.600" fill="none" stroke="#3f5cf0" stroke-width="1.500" stroke-linecap="round"/></svg></span><span class="fi" style="left:48px"><svg width="22" height="26" viewBox="0 0 22 26" ><path d="M15.500 5.800Q15.200 2.700 12 2.700H6.400Q2.900 2.700 2.900 6.200V15.500Q2.900 18.700 5.800 19" fill="none" stroke="#4a4a4a" stroke-width="1.500" stroke-linecap="round"/><rect x="6.300" y="6.700" width="12.600" height="16.700" rx="3.600" fill="none" stroke="#4a4a4a" stroke-width="1.500"/><path d="M9.900 12H13.300M9.900 15.400H15.700M9.900 19H15.700" stroke="#4a4a4a" stroke-width="1.400"/></svg></span><span class="fi" style="left:85px"><svg width="6" height="18" viewBox="0 0 6 18" ><circle cx="3" cy="3" r="1.350" fill="#3a3a3a"/><circle cx="3" cy="9" r="1.350" fill="#3a3a3a"/><circle cx="3" cy="15" r="1.350" fill="#3a3a3a"/></svg></span></div><div class="frow" style="top:252px"><span class="fi" style="left:10px"><svg width="20" height="20" viewBox="0 0 20 20" ><path d="M14.900 3L17.800 5.900L9.700 14L6.800 14.700L7.500 11.700Z" fill="none" stroke="#3f5cf0" stroke-width="1.500" stroke-linejoin="round"/><path d="M5.600 9.800Q3.300 10.300 3.300 12.500V15.800Q3.300 17.800 5.300 17.800H15.500Q17.500 17.800 17.500 15.800V12.500Q17.500 11.300 16.800 10.600" fill="none" stroke="#3f5cf0" stroke-width="1.500" stroke-linecap="round"/></svg></span><span class="fi" style="left:48px"><svg width="22" height="26" viewBox="0 0 22 26" ><path d="M15.500 5.800Q15.200 2.700 12 2.700H6.400Q2.900 2.700 2.900 6.200V15.500Q2.900 18.700 5.800 19" fill="none" stroke="#4a4a4a" stroke-width="1.500" stroke-linecap="round"/><rect x="6.300" y="6.700" width="12.600" height="16.700" rx="3.600" fill="none" stroke="#4a4a4a" stroke-width="1.500"/><path d="M9.900 12H13.300M9.900 15.400H15.700M9.900 19H15.700" stroke="#4a4a4a" stroke-width="1.400"/></svg></span><span class="fi" style="left:85px"><svg width="6" height="18" viewBox="0 0 6 18" ><circle cx="3" cy="3" r="1.350" fill="#3a3a3a"/><circle cx="3" cy="9" r="1.350" fill="#3a3a3a"/><circle cx="3" cy="15" r="1.350" fill="#3a3a3a"/></svg></span></div><div class="frow" style="top:294px"><span class="fi" style="left:10px"><svg width="20" height="20" viewBox="0 0 20 20" ><path d="M14.900 3L17.800 5.900L9.700 14L6.800 14.700L7.500 11.700Z" fill="none" stroke="#3f5cf0" stroke-width="1.500" stroke-linejoin="round"/><path d="M5.600 9.800Q3.300 10.300 3.300 12.500V15.800Q3.300 17.800 5.300 17.800H15.500Q17.500 17.800 17.500 15.800V12.500Q17.500 11.300 16.800 10.600" fill="none" stroke="#3f5cf0" stroke-width="1.500" stroke-linecap="round"/></svg></span><span class="fi" style="left:48px"><svg width="22" height="26" viewBox="0 0 22 26" ><path d="M15.500 5.800Q15.200 2.700 12 2.700H6.400Q2.900 2.700 2.900 6.200V15.500Q2.900 18.700 5.800 19" fill="none" stroke="#4a4a4a" stroke-width="1.500" stroke-linecap="round"/><rect x="6.300" y="6.700" width="12.600" height="16.700" rx="3.600" fill="none" stroke="#4a4a4a" stroke-width="1.500"/><path d="M9.900 12H13.300M9.900 15.400H15.700M9.900 19H15.700" stroke="#4a4a4a" stroke-width="1.400"/></svg></span><span class="fi" style="left:85px"><svg width="6" height="18" viewBox="0 0 6 18" ><circle cx="3" cy="3" r="1.350" fill="#3a3a3a"/><circle cx="3" cy="9" r="1.350" fill="#3a3a3a"/><circle cx="3" cy="15" r="1.350" fill="#3a3a3a"/></svg></span></div><div class="frow" style="top:336px"><span class="fi" style="left:10px"><svg width="20" height="20" viewBox="0 0 20 20" ><path d="M14.900 3L17.800 5.900L9.700 14L6.800 14.700L7.500 11.700Z" fill="none" stroke="#3f5cf0" stroke-width="1.500" stroke-linejoin="round"/><path d="M5.600 9.800Q3.300 10.300 3.300 12.500V15.800Q3.300 17.800 5.300 17.800H15.500Q17.500 17.800 17.500 15.800V12.500Q17.500 11.300 16.800 10.600" fill="none" stroke="#3f5cf0" stroke-width="1.500" stroke-linecap="round"/></svg></span><span class="fi" style="left:48px"><svg width="22" height="26" viewBox="0 0 22 26" ><path d="M15.500 5.800Q15.200 2.700 12 2.700H6.400Q2.900 2.700 2.900 6.200V15.500Q2.900 18.700 5.800 19" fill="none" stroke="#4a4a4a" stroke-width="1.500" stroke-linecap="round"/><rect x="6.300" y="6.700" width="12.600" height="16.700" rx="3.600" fill="none" stroke="#4a4a4a" stroke-width="1.500"/><path d="M9.900 12H13.300M9.900 15.400H15.700M9.900 19H15.700" stroke="#4a4a4a" stroke-width="1.400"/></svg></span><span class="fi" style="left:85px"><svg width="6" height="18" viewBox="0 0 6 18" ><circle cx="3" cy="3" r="1.350" fill="#3a3a3a"/><circle cx="3" cy="9" r="1.350" fill="#3a3a3a"/><circle cx="3" cy="15" r="1.350" fill="#3a3a3a"/></svg></span></div><div class="frow" style="top:378px"><span class="fi" style="left:10px"><svg width="20" height="20" viewBox="0 0 20 20" ><path d="M14.900 3L17.800 5.900L9.700 14L6.800 14.700L7.500 11.700Z" fill="none" stroke="#3f5cf0" stroke-width="1.500" stroke-linejoin="round"/><path d="M5.600 9.800Q3.300 10.300 3.300 12.500V15.800Q3.300 17.800 5.300 17.800H15.500Q17.500 17.800 17.500 15.800V12.500Q17.500 11.300 16.800 10.600" fill="none" stroke="#3f5cf0" stroke-width="1.500" stroke-linecap="round"/></svg></span><span class="fi" style="left:48px"><svg width="22" height="26" viewBox="0 0 22 26" ><path d="M15.500 5.800Q15.200 2.700 12 2.700H6.400Q2.900 2.700 2.900 6.200V15.500Q2.900 18.700 5.800 19" fill="none" stroke="#4a4a4a" stroke-width="1.500" stroke-linecap="round"/><rect x="6.300" y="6.700" width="12.600" height="16.700" rx="3.600" fill="none" stroke="#4a4a4a" stroke-width="1.500"/><path d="M9.900 12H13.300M9.900 15.400H15.700M9.900 19H15.700" stroke="#4a4a4a" stroke-width="1.400"/></svg></span><span class="fi" style="left:85px"><svg width="6" height="18" viewBox="0 0 6 18" ><circle cx="3" cy="3" r="1.350" fill="#3a3a3a"/><circle cx="3" cy="9" r="1.350" fill="#3a3a3a"/><circle cx="3" cy="15" r="1.350" fill="#3a3a3a"/></svg></span></div></div><div class="sumfix"></div></div><div class="vsb"><span class="vsu"><svg width="12" height="8" viewBox="0 0 12 8" ><path d="M1.500 6.500L6 2L10.500 6.500" fill="none" stroke="#555" stroke-width="1.700"/></svg></span><span class="vsth"></span><span class="vsd"><svg width="12" height="8" viewBox="0 0 12 8" ><path d="M1.500 1.500L6 6L10.500 1.500" fill="none" stroke="#555" stroke-width="1.700"/></svg></span></div><div class="gsum"><div class="vl" style="left:39.3px;top:0;height:42px;background:#e9e9e9"></div><div class="vl" style="left:99.4px;top:0;height:42px;background:#e9e9e9"></div><div class="vl" style="left:255.0px;top:0;height:42px;background:#e9e9e9"></div><div class="vl" style="left:484.0px;top:0;height:42px;background:#e9e9e9"></div><div class="vl" style="left:724.0px;top:0;height:42px;background:#e9e9e9"></div><div class="vl" style="left:956.0px;top:0;height:42px;background:#e9e9e9"></div><div class="vl" style="left:1196.0px;top:0;height:42px;background:#e9e9e9"></div><div class="vl" style="left:1340.4px;top:0;height:42px;background:#e9e9e9"></div><div class="sumv" style="left:1254px;width:74px">150</div><div class="sumv" style="left:1354px;width:71.5px">25</div></div><div class="hsb" style="top:680px;width:1553px"><span class="hsl"><svg width="8" height="12" viewBox="0 0 8 12" ><path d="M6.500 1.500L2 6L6.500 10.500" fill="none" stroke="#555" stroke-width="1.700"/></svg></span><span class="hsth" style="left:17px;width:395px"></span><span class="hsr" style="left:1541px"><svg width="8" height="12" viewBox="0 0 8 12" ><path d="M1.500 1.500L6 6L1.500 10.500" fill="none" stroke="#555" stroke-width="1.700"/></svg></span></div><div class="pager"><span class="tot">Tổng số: <b>150</b> bản ghi</span><span class="pg" style="left:1214px">Số dòng/trang</span><span class="pgsel">100</span><span class="pg" style="left:1411.5px">&lt;</span><span class="pg" style="left:1430.5px;letter-spacing:-0.70px;">Trang</span><span class="pg b" style="left:1487.5px">1</span><span class="pg" style="left:1508.8px">2</span><span class="pg" style="left:1535.5px">&gt;</span></div><div class="dblh"></div><div class="btabs"><span class="bt a" style="left:19.3px;letter-spacing:-0.33px;">Lịch sử biến động</span><span class="bt" style="left:182.40000000000003px;letter-spacing:-0.48px;">Thông tin kê khai</span><span class="bt" style="left:338.59999999999997px;letter-spacing:-0.54px;">Tệp đính kèm</span><span class="bcoll"><svg width="20" height="20" viewBox="0 0 20 20" ><circle cx="10" cy="10" r="9.500" fill="#e7e9f5"/><path d="M6 8L10 12L14 8" fill="none" stroke="#4262f0" stroke-width="1.600" stroke-linecap="round" stroke-linejoin="round"/></svg></span></div><div class="bgrid"><div class="bhead"><div class="gh c" style="left:0.0px;width:71.3px;top:0;letter-spacing:-0.89px;">STT</div><div class="gh l" style="left:71.3px;width:144.1px;top:0;letter-spacing:-1.31px;">Số chứng từ</div><div class="gh c" style="left:215.4px;width:179.9px;top:0;letter-spacing:-1.22px;">Ngày chứng từ</div><div class="gh c" style="left:395.3px;width:180.1px;top:0;letter-spacing:-0.98px;">Ngày biến động</div><div class="gh l" style="left:575.4px;width:180.0px;top:0;letter-spacing:-1.08px;">Nội dung</div><div class="gh r" style="left:755.4px;width:180.0px;top:0;letter-spacing:-0.95px;">Nguyên giá</div><div class="gh r" style="left:935.4px;width:180.1px;top:0;letter-spacing:-0.95px;">Số tiền thực hiện</div><div class="gh r" style="left:1115.5px;width:179.8px;top:0;letter-spacing:-0.67px;">Giá trị HM/KH</div><div class="gh r" style="left:1295.3px;width:180.0px;top:0;letter-spacing:-0.69px;">HM/KH lũy kế</div></div><div class="brow" style="top:43px;height:43px;line-height:41.5px"><div class="gc c" style="left:0.0px;width:71.3px;">1</div><div class="gc l lk" style="left:71.3px;width:144.1px;letter-spacing:-0.53px;">HM000041</div><div class="gc c" style="left:215.4px;width:179.9px;letter-spacing:0.12px;">31/12/2024</div><div class="gc c" style="left:395.3px;width:180.1px;letter-spacing:0.12px;">31/12/2024</div><div class="gc l" style="left:575.4px;width:180.0px;letter-spacing:-0.51px;">Hao mòn</div><div class="gc r" style="left:755.4px;width:180.0px;letter-spacing:-0.41px;">15.000.000</div><div class="gc r" style="left:935.4px;width:180.1px;letter-spacing:-0.34px;">3.000.000</div><div class="gc r" style="left:1115.5px;width:179.8px;letter-spacing:-0.34px;">3.000.000</div><div class="gc r" style="left:1295.3px;width:180.0px;letter-spacing:-0.34px;">3.000.000</div></div><div class="brow" style="top:86px;height:41px;line-height:41.5px"><div class="gc c" style="left:0.0px;width:71.3px;">2</div><div class="gc l lk" style="left:71.3px;width:144.1px;letter-spacing:-0.71px;">GT000095</div><div class="gc c" style="left:215.4px;width:179.9px;letter-spacing:0.12px;">17/09/2024</div><div class="gc c" style="left:395.3px;width:180.1px;letter-spacing:0.12px;">17/09/2024</div><div class="gc l" style="left:575.4px;width:180.0px;letter-spacing:-0.57px;">Ghi tăng</div><div class="gc r" style="left:755.4px;width:180.0px;letter-spacing:-0.41px;">15.000.000</div><div class="gc r" style="left:935.4px;width:180.1px;">0</div><div class="gc r" style="left:1115.5px;width:179.8px;">0</div><div class="gc r" style="left:1295.3px;width:180.0px;"></div></div><div class="vl" style="left:71.3px;top:0;height:127px"></div><div class="vl" style="left:215.4px;top:0;height:127px"></div><div class="vl" style="left:395.3px;top:0;height:127px"></div><div class="vl" style="left:575.4px;top:0;height:127px"></div><div class="vl" style="left:755.4px;top:0;height:127px"></div><div class="vl" style="left:935.4px;top:0;height:127px"></div><div class="vl" style="left:1115.5px;top:0;height:127px"></div><div class="vl" style="left:1295.3px;top:0;height:127px"></div><div class="bfix"><div class="gh c" style="left:0;width:107px;top:0;letter-spacing:-1.44px;">Chức năng</div><span class="trash" style="top:54px"><svg width="20" height="22" viewBox="0 0 20 22" ><path d="M2.500 6H17.500M7 6V4.300Q7 2.800 8.500 2.800H11.500Q13 2.800 13 4.300V6M4.200 6V16.500Q4.200 19.200 6.900 19.200H13.100Q15.800 19.200 15.800 16.500V6M8 9.500V15M12 9.500V15" fill="none" stroke="#e0401f" stroke-width="1.500" stroke-linecap="round"/></svg></span><span class="trash" style="top:96px"><svg width="20" height="22" viewBox="0 0 20 22" ><path d="M2.500 6H17.500M7 6V4.300Q7 2.800 8.500 2.800H11.500Q13 2.800 13 4.300V6M4.200 6V16.500Q4.200 19.200 6.900 19.200H13.100Q15.800 19.200 15.800 16.500V6M8 9.500V15M12 9.500V15" fill="none" stroke="#e0401f" stroke-width="1.500" stroke-linecap="round"/></svg></span><div class="hl" style="left:0;top:42px;width:108px"></div><div class="hl" style="left:0;top:85px;width:108px"></div><div class="hl" style="left:0;top:126px;width:108px"></div></div></div><div class="hsb" style="top:917px;width:1552px"><span class="hsl"><svg width="8" height="12" viewBox="0 0 8 12" ><path d="M6.500 1.500L2 6L6.500 10.500" fill="none" stroke="#555" stroke-width="1.700"/></svg></span><span class="hsth" style="left:17px;width:1298px"></span><span class="hsr" style="left:1540px"><svg width="8" height="12" viewBox="0 0 8 12" ><path d="M1.500 1.500L6 6L1.500 10.500" fill="none" stroke="#555" stroke-width="1.700"/></svg></span></div></div>

<div class="redbox" style="left:346px;top:743px;width:176px;height:41px"></div>
<div class="redbox" style="left:1798.500px;top:827px;width:85px;height:44px"></div>
<svg class="ann" style="left:720px;top:355px" width="200" height="120" viewBox="0 0 200 120">
<path d="M25.400 9.500H177.700Q184.700 9.500 184.700 16.500V65.700Q184.700 72.700 177.700 72.700H75L10.800 107.800L48.300 72.700H25.400Q18.400 72.700 18.400 65.700V16.500Q18.400 9.500 25.400 9.500Z" fill="#fff" stroke="#f23a3c" stroke-width="1.900" stroke-linejoin="round"/>
<text x="34.300" y="47.700" font-family="Liberation Sans, sans-serif" font-size="18.670" fill="#111" style="letter-spacing:-0.00px;">Tích vào tài sản</text></svg>
<svg class="ann" style="left:1590px;top:700px" width="250" height="120" viewBox="0 0 250 120">
<path d="M25.700 16.800H161.700Q169.300 16.800 169.300 24.400V71.500L238.400 109.700L145.900 81H25.700Q18.100 81 18.100 73.400V24.400Q18.100 16.800 25.700 16.800Z" fill="#fff" stroke="#f23a3c" stroke-width="1.900" stroke-linejoin="round"/>
<text x="54.300" y="54.700" font-family="Liberation Sans, sans-serif" font-size="18.670" fill="#111" style="letter-spacing:0.35px;">Tích Xóa</text></svg>
<div class="sidetab"><svg width="12" height="14" viewBox="0 0 12 14" ><path d="M3 2L9 7L3 12" fill="none" stroke="#fff" stroke-width="1.800"/></svg></div>
<svg class="cursor" style="left:1895px;top:553px" width="16" height="24" viewBox="0 0 16 24"><path d="M1.500 1.500V18.500L5.500 14.800L8.500 21.500L11 20.400L8 13.800H13.500Z" fill="#fff" stroke="#111" stroke-width="1.200" stroke-linejoin="round"/></svg>
<div class="rshadow"></div><div class="rshadow2"></div><div class="bhext"></div>
<div class="bd" style="left:0;top:0;width:1922px;height:1px"></div>
<div class="bd" style="left:0;top:0;width:1px;height:944px"></div>
<div class="bd" style="left:0;top:943px;width:1922px;height:1px"></div>
<div class="bd" style="left:1920px;top:0;width:2px;height:944px"></div>

</body></html>
